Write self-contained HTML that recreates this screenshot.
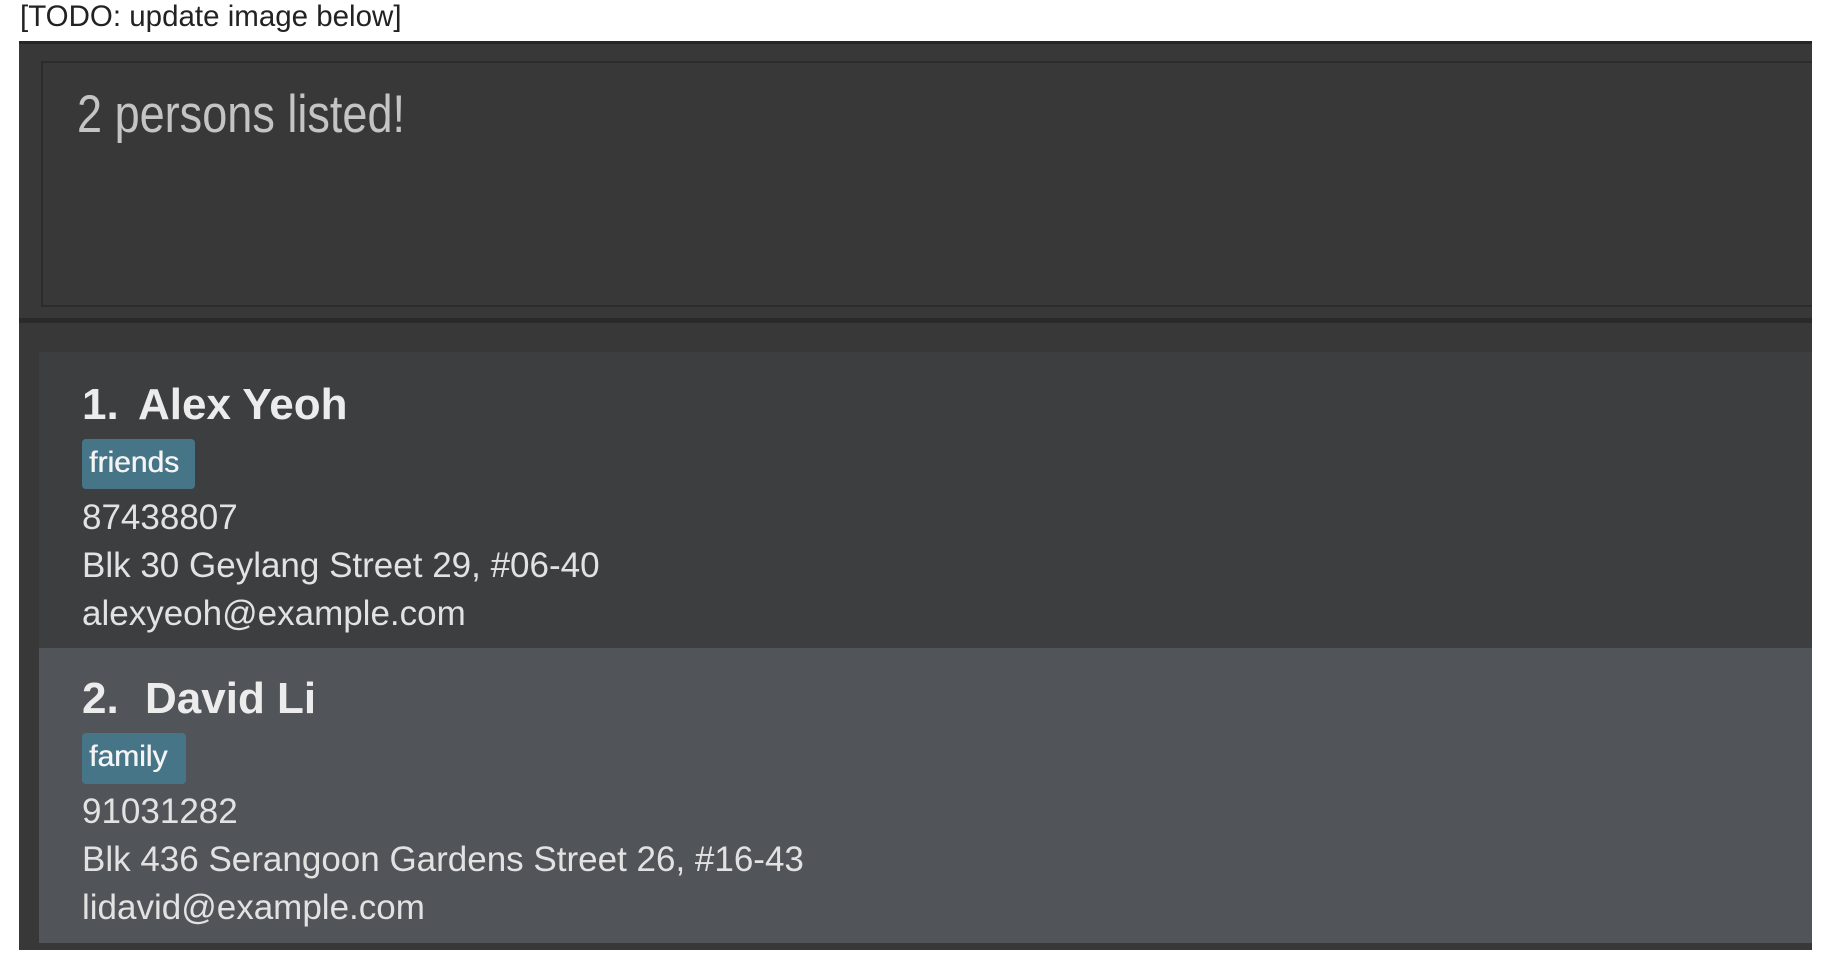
<!DOCTYPE html>
<html><head><meta charset="utf-8"><style>
*{margin:0;padding:0;box-sizing:border-box}
body{width:1829px;height:958px;background:#fff;position:relative;overflow:hidden;font-family:"Liberation Sans",sans-serif}
.a{position:absolute;white-space:nowrap}
.n{font-size:44px;font-weight:bold;color:#ececec}
</style></head><body>
<div class="a" style="left:20px;top:0px;font-size:29.5px;color:#222">[TODO: update image below]</div>
<div class="a" style="left:19px;top:41px;width:1793px;height:909px;background:#383838;border-top:3px solid #262626"></div>
<div class="a" style="left:41px;top:61px;width:1771px;height:246px;background:#383838;border:2px solid #2b2b2b;border-right:none"></div>
<div class="a" style="left:77px;top:84px;font-size:53px;color:#c4c4c4;transform:scaleX(.85);transform-origin:left top">2 persons listed!</div>
<div class="a" style="left:19px;top:318px;width:1793px;height:5px;background:#2a2a2a"></div>
<div class="a" style="left:39px;top:352px;width:1773px;height:296px;background:#3d3e40"></div>
<div class="a" style="left:39px;top:648px;width:1773px;height:295px;background:#515559"></div>
<div class="a n" style="left:82px;top:380px">1.</div>
<div class="a n" style="left:138px;top:380px">Alex Yeoh</div>
<div class="a" style="left:82px;top:439px;width:113px;height:50px;background:#467588;border-radius:4px"></div>
<div class="a" style="left:89px;top:446px;font-size:30px;color:#f4f4f4;text-shadow:0.5px 0 0 #f4f4f4">friends</div>
<div class="a" style="left:82px;top:494px;font-size:35px;color:#e2e2e2;line-height:48px">87438807<br>Blk 30 Geylang Street 29, #06-40<br>alexyeoh@example.com</div>
<div class="a n" style="left:82px;top:674px">2.</div>
<div class="a n" style="left:145px;top:674px">David Li</div>
<div class="a" style="left:82px;top:733px;width:104px;height:51px;background:#467588;border-radius:4px"></div>
<div class="a" style="left:89px;top:740px;font-size:30px;color:#f4f4f4;text-shadow:0.5px 0 0 #f4f4f4">family</div>
<div class="a" style="left:82px;top:788px;font-size:35px;color:#e2e2e2;line-height:48px">91031282<br>Blk 436 Serangoon Gardens Street 26, #16-43<br>lidavid@example.com</div>
</body></html>
